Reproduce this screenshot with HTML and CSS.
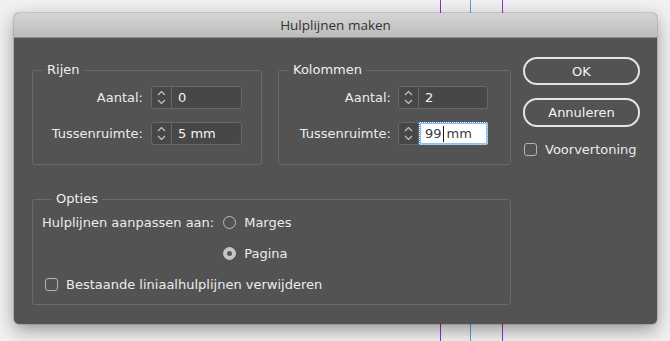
FILE: index.html
```html
<!DOCTYPE html>
<html lang="nl">
<head>
<meta charset="utf-8">
<title>Hulplijnen maken</title>
<link rel="stylesheet" href="styles.css">
</head>
<body>
<div class="guides">
  <div class="guide guide-purple" style="left:440px"></div>
  <div class="guide guide-blue" style="left:470px"></div>
  <div class="guide guide-purple" style="left:502px"></div>
</div>
<div class="page">
  <div class="dialog">
    <div class="titlebar">Hulplijnen maken</div>
    <div class="dialog-body">
      <div class="main-col">
        <div class="group-row">
          <fieldset class="group group-rows">
            <legend>Rijen</legend>
            <div class="field-grid">
              <label class="field-label">Aantal:</label>
              <div class="spinner">
                <span class="spin-arrows"><svg width="19" height="21" viewBox="0 0 19 21"><polyline points="6,8 9.5,4.5 13,8"/><polyline points="6,13 9.5,16.5 13,13"/></svg></span>
                <span class="spin-value">0</span>
              </div>
              <label class="field-label">Tussenruimte:</label>
              <div class="spinner">
                <span class="spin-arrows"><svg width="19" height="21" viewBox="0 0 19 21"><polyline points="6,8 9.5,4.5 13,8"/><polyline points="6,13 9.5,16.5 13,13"/></svg></span>
                <span class="spin-value">5 mm</span>
              </div>
            </div>
          </fieldset>
          <fieldset class="group group-cols">
            <legend>Kolommen</legend>
            <div class="field-grid">
              <label class="field-label">Aantal:</label>
              <div class="spinner">
                <span class="spin-arrows"><svg width="19" height="21" viewBox="0 0 19 21"><polyline points="6,8 9.5,4.5 13,8"/><polyline points="6,13 9.5,16.5 13,13"/></svg></span>
                <span class="spin-value">2</span>
              </div>
              <label class="field-label">Tussenruimte:</label>
              <div class="spinner">
                <span class="spin-arrows"><svg width="19" height="21" viewBox="0 0 19 21"><polyline points="6,8 9.5,4.5 13,8"/><polyline points="6,13 9.5,16.5 13,13"/></svg></span>
                <span class="spin-value focused">99<span class="caret"></span>mm</span>
              </div>
            </div>
          </fieldset>
        </div>
        <fieldset class="group group-options">
          <legend>Opties</legend>
          <div class="options-grid">
            <span class="opt-label">Hulplijnen aanpassen aan:</span>
            <span class="radio-item"><span class="radio"></span>Marges</span>
            <span></span>
            <span class="radio-item"><span class="radio checked"></span>Pagina</span>
            <span class="check-item span-all"><span class="checkbox"></span>Bestaande liniaalhulplijnen verwijderen</span>
          </div>
        </fieldset>
      </div>
      <div class="side-col">
        <button class="btn">OK</button>
        <button class="btn">Annuleren</button>
        <span class="check-item preview"><span class="checkbox"></span>Voorvertoning</span>
      </div>
    </div>
  </div>
</div>
</body>
</html>
```

FILE: styles.css
```css
html, body {
  margin: 0;
  padding: 0;
}
body {
  width: 670px;
  height: 341px;
  overflow: hidden;
  background: #f1f1f1;
  position: relative;
  font-family: "DejaVu Sans", sans-serif;
  font-size: 13px;
  color: #ececec;
}
.guides {
  position: absolute;
  inset: 0;
}
.guide {
  position: absolute;
  top: 0;
  bottom: 0;
  width: 1px;
}
.guide-purple { background: #8d2fd8; }
.guide-blue { background: #3fa7e6; }

.page {
  position: relative;
  padding: 13px 13px 0 14px;
}
.dialog {
  width: 643px;
  height: 311px;
  background: #535353;
  border-radius: 5px;
  box-shadow: 0 6px 18px rgba(0, 0, 0, 0.38), 0 0 0 1px rgba(0, 0, 0, 0.12);
  display: flex;
  flex-direction: column;
}
.titlebar {
  height: 24px;
  line-height: 25px;
  text-align: center;
  font-family: "Open Sans", "DejaVu Sans", sans-serif;
  font-size: 13.5px;
  color: #333333;
  background: linear-gradient(#d5d5d5, #bcbcbc);
  border-bottom: 1px solid #8e8e8e;
  border-radius: 5px 5px 0 0;
}
.dialog-body {
  flex: 1;
  display: flex;
  padding: 0 17px 0 18px;
}
.main-col {
  width: 479px;
  padding-top: 24px;
}
.group-row {
  display: flex;
  gap: 16px;
}
.group {
  margin: 0;
  padding: 0;
  min-width: 0;
  border: 1px solid #6a6a6a;
  border-radius: 3px;
}
.group legend {
  margin-left: 10px;
  padding: 0 4px;
  line-height: 16px;
  color: #f0f0f0;
}
.group-rows {
  width: 230px;
  box-sizing: border-box;
  padding: 8px 19px 19px 0;
}
.group-cols {
  flex: 1;
  padding: 8px 22px 19px 0;
}
.field-grid {
  display: grid;
  grid-template-columns: 1fr 91px;
  column-gap: 8px;
  row-gap: 13px;
  align-items: center;
}
.group-cols .field-grid {
  grid-template-columns: 1fr 90px;
  column-gap: 7px;
}
.field-label {
  text-align: right;
  white-space: nowrap;
}
.spinner {
  display: flex;
  height: 23px;
  box-sizing: border-box;
  border: 1px solid #686868;
  border-radius: 3px;
  background: #474747;
}
.spin-arrows {
  width: 19px;
  border-right: 1px solid #686868;
  display: flex;
}
.spin-arrows svg {
  display: block;
}
.spin-arrows polyline {
  fill: none;
  stroke: #c4c4c4;
  stroke-width: 1.2;
}
.spin-value {
  flex: 1;
  padding-left: 6px;
  line-height: 21px;
  color: #f4f4f4;
}
.spin-value.focused {
  margin: -1px -1px -1px 0;
  background: #ffffff;
  color: #3a3a3a;
  border: 1px dotted #4e97e2;
  box-shadow: inset 0 0 0 1px #8cbcf0;
  border-radius: 0 2px 2px 0;
  line-height: 21px;
  display: flex;
  align-items: center;
  padding-left: 5px;
}
.caret {
  display: inline-block;
  width: 1px;
  height: 16px;
  background: #111;
  margin: 0 3px 0 1px;
}
.group-options {
  margin-top: 26px;
  padding: 5px 10px 10px 9px;
}
.options-grid {
  display: grid;
  grid-template-columns: auto 1fr;
  column-gap: 9px;
  grid-auto-rows: 20px;
  row-gap: 11px;
  align-items: center;
}
.span-all {
  grid-column: 1 / -1;
  margin-top: 1px;
}
.radio-item, .check-item {
  display: flex;
  align-items: center;
  gap: 8px;
  white-space: nowrap;
}
.radio {
  width: 13px;
  height: 13px;
  box-sizing: border-box;
  border: 1px solid #bdbdbd;
  border-radius: 50%;
  display: flex;
  align-items: center;
  justify-content: center;
}
.radio.checked {
  background: #c6c6c6;
  border-color: #c6c6c6;
}
.radio.checked::after {
  content: "";
  width: 5px;
  height: 5px;
  border-radius: 50%;
  background: #575757;
}
.checkbox {
  width: 13px;
  height: 13px;
  box-sizing: border-box;
  border: 1px solid #b4b4b4;
  border-radius: 3px;
}
.group-options .check-item {
  padding-left: 3px;
}
.side-col {
  margin-left: 12px;
  width: 117px;
  padding-top: 19px;
  display: flex;
  flex-direction: column;
}
.btn {
  height: 28px;
  border: 2px solid #e4e4e4;
  border-radius: 14px;
  background: transparent;
  color: #f4f4f4;
  font-family: "DejaVu Sans", sans-serif;
  font-size: 13px;
  padding: 0;
}
.btn + .btn {
  margin-top: 13px;
  height: 29px;
}
.preview {
  margin-top: 15px;
  padding-left: 1px;
}
```
